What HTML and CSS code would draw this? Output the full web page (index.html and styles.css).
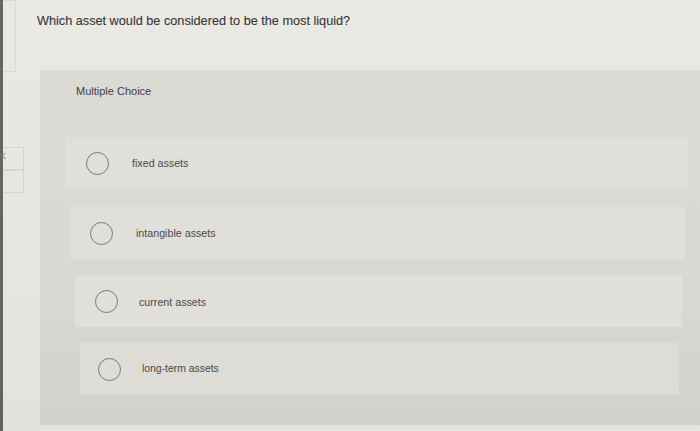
FILE: index.html
```html
<!DOCTYPE html>
<html>
<head>
<meta charset="utf-8">
<link rel="stylesheet" href="styles.css">
</head>
<body>
<div class="screen">
  <div class="edge"></div>
  <div class="side">
    <div class="side-card"></div>
    <div class="side-tabs">
      <div class="side-tab">K</div>
      <div class="side-tab"></div>
    </div>
  </div>
  <main class="content">
    <h1 class="question">Which asset would be considered to be the most liquid?</h1>
    <section class="panel">
      <div class="label">Multiple Choice</div>
      <ul class="options">
        <li class="option o1"><span class="radio"></span><span class="text">fixed assets</span></li>
        <li class="option o2"><span class="radio"></span><span class="text">intangible assets</span></li>
        <li class="option o3"><span class="radio"></span><span class="text">current assets</span></li>
        <li class="option o4"><span class="radio"></span><span class="text">long-term assets</span></li>
      </ul>
    </section>
  </main>
</div>
</body>
</html>
```
FILE: styles.css
```css
* { box-sizing: border-box; }
html, body { margin: 0; padding: 0; }
body {
  width: 700px;
  height: 431px;
  overflow: hidden;
  background: #e8e6e1;
  font-family: "Liberation Sans", Arial, sans-serif;
}
.screen {
  display: flex;
  height: 431px;
  background: linear-gradient(180deg, #ebe9e4 0%, #e4e2dc 100%);
}
.edge {
  width: 3px;
  background: #67645e;
  flex: none;
}
.side {
  width: 21px;
  flex: none;
  display: flex;
  flex-direction: column;
}
.side-card {
  width: 13px;
  height: 72px;
  border: 1px solid #dcdad4;
  border-left: none;
  background: #eae8e3;
}
.side-tabs {
  margin-top: 75px;
  display: flex;
  flex-direction: column;
}
.side-tab {
  height: 23px;
  width: 21px;
  border: 1px solid #d6d4ce;
  border-left: none;
  font-size: 9px;
  color: #777;
  line-height: 16px;
  text-indent: -3px;
}
.content {
  flex: 1;
  display: flex;
  flex-direction: column;
  padding-left: 13px;
}
.question {
  margin: 13px 0 0 0;
  font-size: 12.7px;
  font-weight: normal;
  color: #363636;
  line-height: 16px;
  height: 57px;
  -webkit-text-stroke: 0.1px #363636;
}
.panel {
  margin-left: 3px;
  height: 355px;
  background: linear-gradient(180deg, #dcdad4 0%, #dad8d2 60%, #d3d1cb 100%);
  padding-top: 15px;
}
.label {
  margin-left: 36px;
  font-size: 11px;
  color: #3e3e3e;
  line-height: 12px;
}
.options {
  list-style: none;
  margin: 40px 0 0 0;
  padding: 0;
  display: flex;
  flex-direction: column;
}
.option {
  height: 52px;
  background: #e1dfda;
  display: flex;
  align-items: center;
}
.o1 { margin-left: 25px; margin-right: 12px; }
.o2 { margin-left: 30px; margin-right: 15px; margin-top: 18px; }
.o3 { margin-left: 35px; margin-right: 18px; margin-top: 17px; height: 51px; }
.o4 { margin-left: 40px; margin-right: 21px; margin-top: 16px; background: #dedcd7; }
.radio {
  width: 23px;
  height: 23px;
  border-radius: 50%;
  border: 1.3px solid #7a7874;
  margin-left: 21px;
  flex: none;
}
.o2 .radio { margin-left: 20px; }
.o3 .radio { margin-left: 20px; }
.o4 .radio { margin-left: 18px; }
.text {
  margin-left: 23px;
  font-size: 10.7px;
  color: #4a4a4a;
  line-height: 12px;
}
.o3 .text { margin-left: 21px; }
.o4 .text { margin-left: 21px; font-size: 10.4px; }
```
